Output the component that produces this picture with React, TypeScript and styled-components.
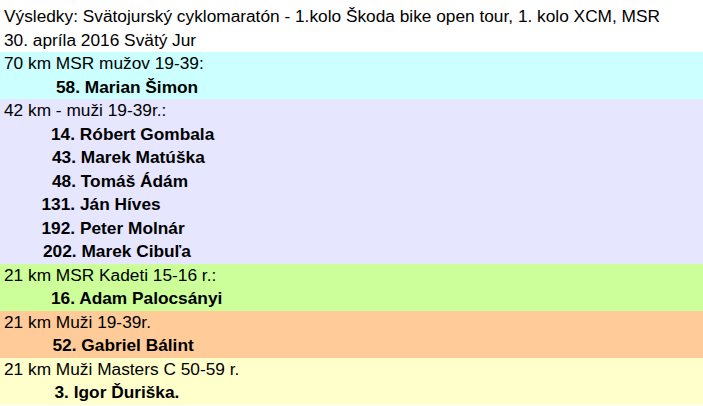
import React from "react";
import styled, { createGlobalStyle } from "styled-components";

interface IResult {
  place: string;
  name: string;
  indent: number;
}

interface ICategory {
  title: string;
  color: string;
  results: IResult[];
}

const categories: ICategory[] = [
  {
    title: "70 km MSR mužov 19-39:",
    color: "#ccffff",
    results: [{ place: "58.", name: "Marian Šimon", indent: 56 }],
  },
  {
    title: "42 km - muži 19-39r.:",
    color: "#e6e6ff",
    results: [
      { place: "14.", name: "Róbert Gombala", indent: 51 },
      { place: "43.", name: "Marek Matúška", indent: 52 },
      { place: "48.", name: "Tomáš Ádám", indent: 52 },
      { place: "131.", name: "Ján Híves", indent: 41.5 },
      { place: "192.", name: "Peter Molnár", indent: 41.5 },
      { place: "202.", name: "Marek Cibuľa", indent: 43 },
    ],
  },
  {
    title: "21 km MSR Kadeti 15-16 r.:",
    color: "#ccff99",
    results: [{ place: "16.", name: "Adam Palocsányi", indent: 51 }],
  },
  {
    title: "21 km Muži 19-39r.",
    color: "#ffcc99",
    results: [{ place: "52.", name: "Gabriel Bálint", indent: 52.5 }],
  },
  {
    title: "21 km Muži Masters C 50-59 r.",
    color: "#ffffcc",
    results: [{ place: "3.", name: "Igor Ďuriška.", indent: 54.5 }],
  },
];

const App: React.FC = () => {
  return (
    <>
      <GlobalStyle />
      <Sheet>
        <Row>Výsledky: Svätojurský cyklomaratón - 1.kolo Škoda bike open tour, 1. kolo XCM, MSR</Row>
        <Row>30. apríla 2016 Svätý Jur</Row>
        {categories.map((cat) => (
          <Block key={cat.title} $color={cat.color}>
            <Row>{cat.title}</Row>
            {cat.results.map((r) => (
              <ResultRow key={r.place} $indent={r.indent}>
                {r.place} {r.name}
              </ResultRow>
            ))}
          </Block>
        ))}
      </Sheet>
    </>
  );
};

const GlobalStyle = createGlobalStyle`
  html, body {
    margin: 0;
    padding: 0;
    background: #ffffff;
  }
  body {
    font-family: "Liberation Sans", Arial, sans-serif;
    color: #000000;
  }
`;

const Sheet = styled.div`
  width: 703px;
  padding-top: 5px;
`;

const Block = styled.div<{ $color: string }>`
  background: ${(p) => p.$color};
`;

const Row = styled.div`
  height: 23.5px;
  line-height: 23.5px;
  padding-left: 4px;
  font-size: 17.3px;
  white-space: nowrap;
`;

const ResultRow = styled(Row)<{ $indent: number }>`
  padding-left: ${(p) => p.$indent}px;
  font-weight: bold;
`;

export default App;
